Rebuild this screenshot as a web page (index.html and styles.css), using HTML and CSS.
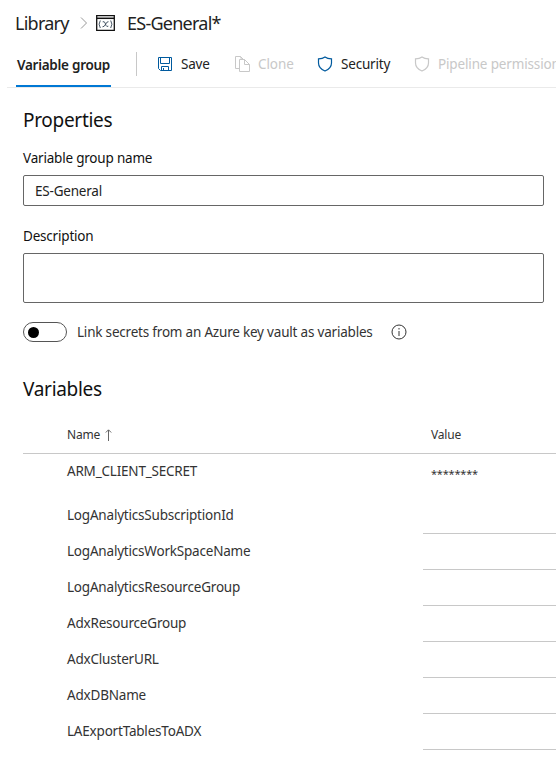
FILE: index.html
```html
<!DOCTYPE html>
<html lang="en">
<head>
<meta charset="utf-8">
<title>ES-General - Library</title>
<link rel="stylesheet" href="styles.css">
</head>
<body>
<header class="crumbs">
  <span class="crumb library">Library</span>
  <svg class="chevron" width="8" height="14" viewBox="0 0 8 14"><path d="M1 1.5 6.5 7 1 12.5"/></svg>
  <svg class="group-icon" width="19" height="16" viewBox="0 0 19 16"><path class="frame" d="M.7 .7H18.3V15.3H.7Z"/><path class="bar" d="M1 3.3H18"/><path class="paren" d="M4.3 5.5Q1.9 9.2 4.3 13M14.7 5.5Q17.1 9.2 14.7 13M6.7 6.8Q8.500 6 9.2 8.200L10 10.5Q10.6 12 12.3 11.2M12.5 6.700Q11 6.300 9.6 9.200T6.5 11.8"/></svg>
  <h1 class="crumb title">ES-General*</h1>
</header>
<nav class="toolbar">
  <span class="tab">Variable group</span>
  <span class="divider"></span>
  <span class="command save"><svg class="icon blue" width="16" height="16" viewBox="0 0 16 16"><path d="M1.5 1.5H14.5V14.5H3.5L1.5 12.5ZM3.5 1.5V7.5H12.5V1.5M4.5 14.5V10.5H11.5V14.5M6.5 12V14.5"/></svg>Save</span>
  <span class="command clone disabled"><svg class="icon" width="16" height="16" viewBox="0 0 16 16"><path d="M5.5 12.5H1.5V.5H6.5L9.5 3.5M10.5 3.5H5.5V15.5H15.5V8.5L10.5 3.5V8.5H15.5M7.5 3.5 6.5 .5"/></svg>Clone</span>
  <span class="command security"><svg class="icon blue" width="16" height="16" viewBox="0 0 16 16"><path class="shield" d="M8 1C6 2.5 4 2.8 1.5 2.8V7C1.5 10.8 4.5 13.5 8 15C11.5 13.5 14.5 10.8 14.5 7V2.8C12 2.8 10 2.5 8 1Z"/></svg>Security</span>
  <span class="command permissions disabled"><svg class="icon" width="16" height="16" viewBox="0 0 16 16"><path class="shield" d="M8 1C6 2.5 4 2.8 1.5 2.8V7C1.5 10.8 4.5 13.5 8 15C11.5 13.5 14.5 10.8 14.5 7V2.8C12 2.8 10 2.5 8 1Z"/></svg>Pipeline permissions</span>
</nav>
<main class="content">
  <h2 class="heading">Properties</h2>
  <div class="field-label">Variable group name</div>
  <div class="field name-field">ES-General</div>
  <div class="field-label description-label">Description</div>
  <div class="field description-field"></div>
  <div class="link-row">
    <span class="toggle"><span class="knob"></span></span>
    <span class="link-label">Link secrets from an Azure key vault as variables</span>
    <svg class="info" width="16" height="16" viewBox="0 0 16 16"><circle cx="8" cy="8" r="7"/><path d="M8 7V12M8 4V5.5"/></svg>
  </div>
  <h2 class="heading variables-heading">Variables</h2>
  <div class="table">
    <div class="row head"><span class="cell">Name<svg class="arrow" width="7" height="12" viewBox="0 0 7 12"><path d="M3.5 12V1M.8 3.5 3.5 .8 6.2 3.5"/></svg></span><span class="value head-value">Value</span></div>
    <div class="row secret"><span class="cell">ARM_CLIENT_SECRET</span><span class="value stars">********</span></div>
    <div class="row"><span class="cell">LogAnalyticsSubscriptionId</span><span class="value line"></span></div>
    <div class="row"><span class="cell">LogAnalyticsWorkSpaceName</span><span class="value line"></span></div>
    <div class="row"><span class="cell">LogAnalyticsResourceGroup</span><span class="value line"></span></div>
    <div class="row"><span class="cell">AdxResourceGroup</span><span class="value line"></span></div>
    <div class="row"><span class="cell">AdxClusterURL</span><span class="value line"></span></div>
    <div class="row"><span class="cell">AdxDBName</span><span class="value line"></span></div>
    <div class="row"><span class="cell">LAExportTablesToADX</span><span class="value line"></span></div>
  </div>
</main>
</body>
</html>
```
FILE: styles.css
```css
* { box-sizing: border-box; }
body {
  margin: 0;
  width: 556px;
  height: 768px;
  overflow: hidden;
  background: #fff;
  color: #222;
  font: 13.5px/20px "Noto Sans", "Open Sans", sans-serif;
  letter-spacing: -0.2px;
  white-space: nowrap;
}
h1, h2 { margin: 0; font-weight: 400; }
svg { display: block; fill: none; flex: none; }
.crumbs { display: flex; align-items: center; height: 45px; padding-left: 15px; }
.crumb { font-size: 18px; line-height: 24px; letter-spacing: -0.75px; }
.library { width: 65px; letter-spacing: -0.75px; }
.chevron { stroke: #999; }
.group-icon { margin: 0 12px 0 8px; stroke: #111; stroke-width: 1.3; }
.bar { stroke-width: 1.5; }
.paren { stroke-width: 0.9; stroke: #345; }
.toolbar { display: flex; align-items: center; height: 43px; margin-left: 7px; padding-bottom: 5px; border-bottom: 1px solid #eaeaea; }
.tab { flex: none; width: 95px; height: 42px; margin: 4px 25px 0 9px; padding: 10px 0 0 1px; border-bottom: 2px solid #0078d4; font-weight: 600; letter-spacing: -0.27px; }
.divider { flex: none; width: 1px; height: 24px; background: #c8c8c8; margin-right: 20px; }
.command { display: flex; align-items: center; flex: none; gap: 8px; }
.save { width: 77px; }
.clone { width: 83px; letter-spacing: -0.1px; }
.security { width: 97px; }
.permissions { letter-spacing: -0.15px; }
.icon { stroke: currentColor; }
.blue { color: #005a9e; }
.disabled { color: #c8c8c8; }
.shield { stroke-width: 1.2; }
.content { padding: 19px 0 0 23px; }
.heading { font-size: 19px; line-height: 26px; letter-spacing: -0.3px; color: #111; }
.field-label { margin-top: 15px; margin-bottom: 7px; color: #111; }
.field { width: 521px; border: 1px solid #666; border-radius: 2px; }
.name-field { height: 31px; padding: 5px 11px; }
.description-label { margin-top: 20px; }
.description-field { height: 50px; }
.link-row { display: flex; align-items: center; height: 20px; margin-top: 19px; color: #333; }
.toggle { width: 44px; height: 20px; border: 1px solid #555; border-radius: 10px; padding: 4px; margin-right: 10px; }
.knob { display: block; width: 11px; height: 11px; border-radius: 50%; background: #000; }
.link-label { width: 314px; }
.info { stroke: #333; }
.variables-heading { margin-top: 34px; }
.table { margin-top: 14px; color: #333; }
.row { display: grid; grid-template-columns: 400px 1fr; height: 36px; }
.cell { display: flex; align-items: center; padding: 0 0 2px 44px; }
.value { display: flex; align-items: center; }
.head { height: 38px; border-bottom: 1px solid #c8c8c8; margin-top: 13px; font-size: 12px; }
.head .cell { padding-bottom: 0; }
.arrow { stroke: #666; margin-left: 5px; }
.head-value, .stars { padding-left: 8px; }
.stars { padding-top: 3px; font-size: 11px; letter-spacing: -0.2px; }
.secret { height: 44px; padding-bottom: 8px; }
.line { border-bottom: 1px solid #c8c8c8; }
```
